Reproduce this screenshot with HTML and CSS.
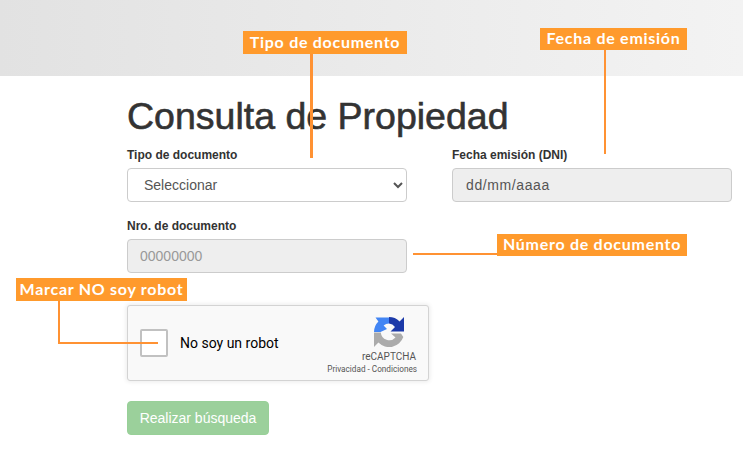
FILE: index.html
```html
<!DOCTYPE html>
<html lang="es">
<head>
<meta charset="utf-8">
<title>Consulta de Propiedad</title>
<link rel="stylesheet" href="styles.css">
</head>
<body>
<header class="band"></header>
<main class="page">
  <h1 class="title">Consulta de Propiedad</h1>
  <form class="form">
    <div class="row">
      <div class="field">
        <label class="label" for="tipo">Tipo de documento</label>
        <select class="control" id="tipo"><option>Seleccionar</option></select>
      </div>
      <div class="field">
        <label class="label" for="fecha">Fecha emisión (DNI)</label>
        <input class="control control-off control-date" id="fecha" type="text" value="dd/mm/aaaa" readonly>
      </div>
    </div>
    <div class="row row-second">
      <div class="field">
        <label class="label" for="nro">Nro. de documento</label>
        <input class="control control-off" id="nro" type="text" placeholder="00000000" readonly>
      </div>
    </div>
    <div class="captcha">
      <span class="captcha-box"></span>
      <span class="captcha-text">No soy un robot</span>
      <div class="captcha-brand">
        <svg class="captcha-logo" viewBox="0 0 30 30" width="30" height="30" aria-hidden="true">
          <path fill="#1c3aa9" d="M15 0A15 15 0 0 1 25.600 4.400L30 0V14.500H16.500L21 10A8.500 8.500 0 0 0 15 6.500Z"/>
          <path fill="#4285f4" d="M0 15A15 15 0 0 1 4.400 4.400L1.500 .5H15V6.500A8.500 8.500 0 0 0 9.600 8.400L13 12 6.500 15Z"/>
          <path fill="#ababab" d="M0 15.500H6.800A8.500 8.500 0 0 0 21.500 20.500L17 16.500H27L29.300 20A15 15 0 0 1 4.400 25.600L0 30Z"/>
        </svg>
        <span class="captcha-name">reCAPTCHA</span>
        <span class="captcha-links">Privacidad - Condiciones</span>
      </div>
    </div>
    <button class="submit" type="button">Realizar búsqueda</button>
  </form>
</main>

<div class="note note-tipo">Tipo de documento</div>
<div class="note note-fecha">Fecha de emisión</div>
<div class="note note-numero">Número de documento</div>
<div class="note note-robot">Marcar NO soy robot</div>
<span class="wire wire-tipo"></span>
<span class="wire wire-fecha"></span>
<span class="wire wire-numero"></span>
<span class="wire wire-robot-v"></span>
<span class="wire wire-robot-h"></span>
</body>
</html>
```
FILE: styles.css
```css
* { box-sizing: border-box; }
html, body { margin: 0; height: 100%; overflow: hidden; }
body { background: #fff; color: #333; font-family: "Liberation Sans", Arial, sans-serif; font-size: 14px; position: relative; }

.band { height: 76px; background: linear-gradient(90deg, #e2e2e2, #f3f3f3); }
.page { padding: 0 11px 0 127px; }
.title { margin: 20px 0 0; font-size: 37.5px; font-weight: 400; line-height: 40px; color: #333; -webkit-text-stroke: 0.6px #333; }
.form { margin-top: 11px; }
.row { display: grid; grid-template-columns: 280px 280px; column-gap: 45px; }
.row-second { margin-top: 16px; }
.field { display: flex; flex-direction: column; }
.label { font-size: 12px; font-weight: 700; line-height: 16px; margin-bottom: 5px; color: #333; }
.control { height: 34px; width: 100%; border: 1px solid #ccc; border-radius: 4px; background: #fff; color: #555; font: 14px "Liberation Sans", Arial, sans-serif; padding: 6px 12px; outline: none; }
.control-off { background: #eee; }
.control-off::placeholder { color: #999; opacity: 1; }
.control-date { padding-left: 13px; letter-spacing: 0.6px; }

.captcha { width: 302px; height: 76px; margin-top: 32px; display: flex; align-items: center; background: #f9f9f9; border: 1px solid #d3d3d3; border-radius: 3px; box-shadow: 0 0 4px 1px rgba(0,0,0,.08); padding: 0 12px; }
.captcha-box { width: 28px; height: 28px; border: 2px solid #c1c1c1; border-radius: 2px; background: #fff; flex: none; }
.captcha-text { margin-left: 12px; font: 14px Roboto, sans-serif; color: #000; }
.captcha-brand { margin-left: auto; align-self: flex-start; display: flex; flex-direction: column; align-items: flex-end; padding-top: 11px; }
.captcha-logo { margin-right: 12px; }
.captcha-name { font: 10px/12px Roboto, sans-serif; color: #555; margin-top: 4px; }
.captcha-links { font: 8.2px/10px Roboto, sans-serif; color: #555; margin-top: 1px; margin-right: -1px; white-space: nowrap; }

.submit { display: block; margin-top: 20px; width: 142px; height: 34px; border: 1px solid #98d098; border-radius: 4px; background: #9bd09b; color: #fff; font: 14px "Liberation Sans", Arial, sans-serif; padding: 0; }

.note { position: absolute; display: flex; align-items: center; justify-content: center; height: 23px; padding-bottom: 3px; background: #ff9a2c; color: #fff; font: 700 16px Lato, sans-serif; letter-spacing: .72px; white-space: nowrap; }
.note-tipo { left: 243px; top: 31px; width: 164px; }
.note-fecha { left: 540px; top: 28px; width: 147px; height: 22px; }
.note-numero { left: 497px; top: 234px; width: 190px; height: 22px; }
.note-robot { left: 16px; top: 278px; width: 171px; }

.wire { position: absolute; background: #ff9233; }
.wire-tipo { left: 310px; top: 54px; width: 2.500px; height: 104px; }
.wire-fecha { left: 604px; top: 50px; width: 2px; height: 104px; }
.wire-numero { left: 413px; top: 253px; width: 84px; height: 2px; }
.wire-robot-v { left: 58px; top: 301px; width: 2px; height: 43px; }
.wire-robot-h { left: 58px; top: 342px; width: 100px; height: 2px; }
```
